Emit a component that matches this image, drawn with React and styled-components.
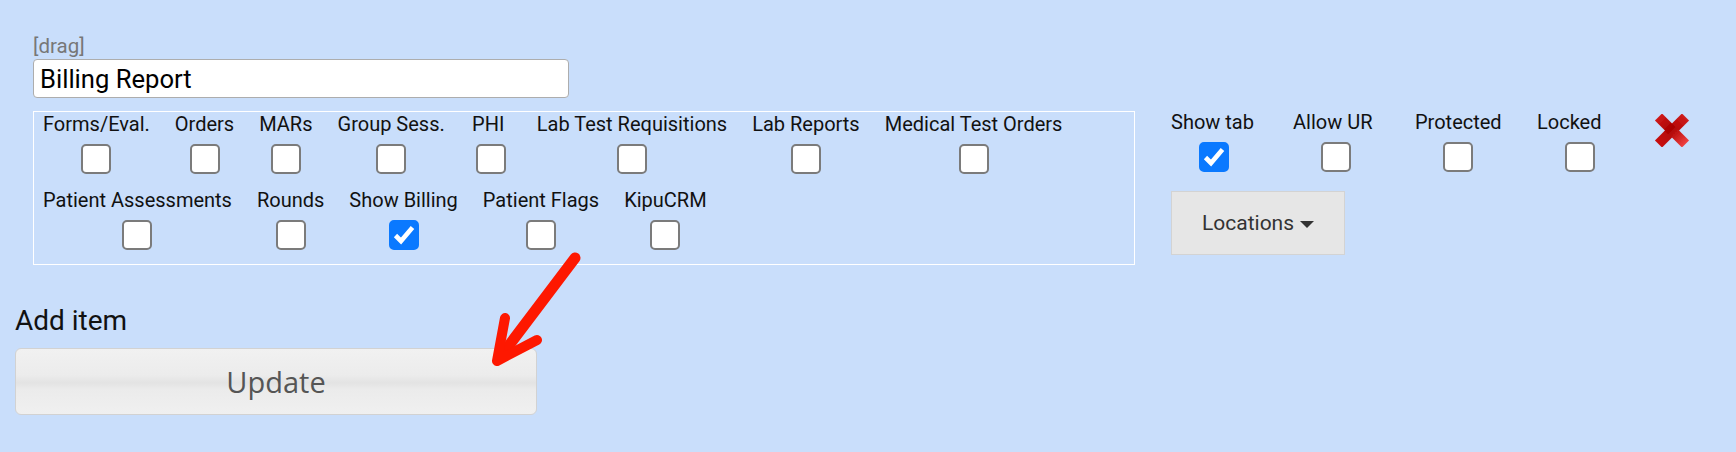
import React from "react";
import styled, { createGlobalStyle } from "styled-components";

const GlobalStyle = createGlobalStyle`
  html, body {
    margin: 0;
    padding: 0;
    background: #c9defb;
  }
  body {
    font-family: Roboto, "Liberation Sans", Arial, sans-serif;
    color: #111;
  }
  * { box-sizing: border-box; }
`;

const Page = styled.div`
  position: relative;
  width: 1736px;
  height: 452px;
  padding: 36px 15px 0 15px;
  overflow: hidden;
`;

const TabItem = styled.div`
  padding-left: 18px;
`;

const DragHandle = styled.div`
  font-size: 20.5px;
  line-height: 20px;
  color: #777;
  cursor: move;
`;

const NameInput = styled.input`
  display: block;
  margin-top: 3px;
  width: 536px;
  height: 39px;
  padding: 0 6px;
  border: 1px solid #adadad;
  border-radius: 4px;
  background: #fff;
  font-family: Roboto, "Liberation Sans", Arial, sans-serif;
  font-size: 25.6px;
  color: #000;
  outline: none;
`;

const SettingsRow = styled.div`
  display: flex;
  align-items: flex-start;
  margin-top: 13px;
`;

const PermBox = styled.div`
  width: 1102px;
  height: 154px;
  border: 1px solid #fff;
  padding: 0 9px;
  display: flex;
  flex-wrap: wrap;
  align-content: flex-start;
  column-gap: 25px;
  row-gap: 14px;
`;

const Perm = styled.label`
  min-width: 42px;
  display: flex;
  flex-direction: column;
  align-items: center;
`;

const PermLabel = styled.span`
  font-size: 20px;
  line-height: 24px;
  white-space: pre;
  color: #111;
`;

const Box = styled.span`
  display: flex;
  align-items: center;
  justify-content: center;
  width: 30px;
  height: 30px;
  margin-top: 8px;
  border-radius: 5px;
  border: 2px solid ${(p) => (p.$checked ? "#0a79ff" : "#7b7b7b")};
  background: ${(p) => (p.$checked ? "#0a79ff" : "#fff")};
`;

const TabOptions = styled.div`
  margin-left: 36px;
  margin-top: -1px;
`;

const OptionRow = styled.div`
  display: flex;
  align-items: flex-start;
`;

const OptionCol = styled.label`
  width: 86px;
  margin-right: 36px;
  display: flex;
  flex-direction: column;
  align-items: center;
`;

const OptionLabel = styled(PermLabel)`
  align-self: flex-start;
`;

const DeleteButton = styled.button`
  margin: 3px 0 0 -5px;
  padding: 0;
  border: 0;
  background: none;
  width: 36px;
  height: 35px;
  cursor: pointer;
`;

const LocationsButton = styled.button`
  display: flex;
  align-items: center;
  justify-content: center;
  gap: 6px;
  margin-top: 19px;
  width: 174px;
  height: 64px;
  border: 1px solid #d3d3d3;
  border-radius: 0;
  background: #e6e6e6;
  font-family: Roboto, "Liberation Sans", Arial, sans-serif;
  font-size: 21px;
  color: #333;
  cursor: pointer;
`;

const Caret = styled.span`
  width: 0;
  height: 0;
  margin-top: 2px;
  border-left: 7px solid transparent;
  border-right: 7px solid transparent;
  border-top: 7px solid #333;
`;

const AddItem = styled.div`
  margin-top: 39px;
  font-size: 28px;
  line-height: 33px;
  color: #111;
`;

const UpdateButton = styled.button`
  display: block;
  margin-top: 11px;
  width: 522px;
  height: 67px;
  border: 1px solid #d2d2d2;
  border-radius: 6px;
  background: linear-gradient(
    to bottom,
    #f1f1f1 0%,
    #ececec 40%,
    #e3e3e3 52%,
    #ebebeb 62%,
    #f0f0f0 100%
  );
  font-family: "Open Sans", "Noto Sans", sans-serif;
  font-size: 29px;
  color: #555;
  cursor: pointer;
`;

const Pointer = styled.svg`
  position: absolute;
  left: 0;
  top: 0;
  pointer-events: none;
`;

function CheckMark() {
  return (
    <svg width="26" height="26" viewBox="0 0 26 26">
      <path
        d="M4.5 13.5 L10 19 L21.5 5.5"
        fill="none"
        stroke="#fff"
        strokeWidth="4.6"
        strokeLinejoin="miter"
      />
    </svg>
  );
}

function Checkbox({ checked }) {
  return (
    <Box role="checkbox" aria-checked={checked} $checked={checked}>
      {checked && <CheckMark />}
    </Box>
  );
}

/* Glossy red cross used for removing a tab */
function DeleteIcon() {
  return (
    <svg width="36" height="35" viewBox="0 0 36 35">
      <defs>
        <linearGradient id="xArmA" x1="0" y1="0" x2="1" y2="1">
          <stop offset="0" stopColor="#d01a1a" />
          <stop offset="0.45" stopColor="#a80000" />
          <stop offset="1" stopColor="#f04040" />
        </linearGradient>
        <linearGradient id="xArmB" x1="1" y1="0" x2="0" y2="1">
          <stop offset="0" stopColor="#cf1c1c" />
          <stop offset="0.5" stopColor="#b00303" />
          <stop offset="1" stopColor="#c81010" />
        </linearGradient>
        <filter id="xSoft" x="-10%" y="-10%" width="120%" height="120%">
          <feGaussianBlur stdDeviation="0.55" />
        </filter>
      </defs>
      <g filter="url(#xSoft)" strokeWidth="10" strokeLinecap="butt">
        <line x1="31.5" y1="4" x2="4.5" y2="31" stroke="url(#xArmB)" />
        <line x1="4.5" y1="4" x2="31.5" y2="31" stroke="url(#xArmA)" />
      </g>
    </svg>
  );
}

const permissions = [
  { label: "Forms/Eval." },
  { label: "Orders" },
  { label: "MARs" },
  { label: "Group Sess." },
  { label: "PHI\u00a0" },
  { label: "Lab Test Requisitions" },
  { label: "Lab Reports" },
  { label: "Medical Test Orders" },
  { label: "Patient Assessments" },
  { label: "Rounds" },
  { label: "Show Billing", checked: true },
  { label: "Patient Flags" },
  { label: "KipuCRM" },
];

const tabOptions = [
  { label: "Show tab", checked: true },
  { label: "Allow UR" },
  { label: "Protected" },
  { label: "Locked" },
];

export default function App() {
  return (
    <>
      <GlobalStyle />
      <Page>
        <TabItem>
          <DragHandle>[drag]</DragHandle>
          <NameInput defaultValue="Billing Report" />
          <SettingsRow>
            <PermBox>
              {permissions.map((p) => (
                <Perm key={p.label}>
                  <PermLabel>{p.label}</PermLabel>
                  <Checkbox checked={!!p.checked} />
                </Perm>
              ))}
            </PermBox>
            <TabOptions>
              <OptionRow>
                {tabOptions.map((o) => (
                  <OptionCol key={o.label}>
                    <OptionLabel>{o.label}</OptionLabel>
                    <Checkbox checked={!!o.checked} />
                  </OptionCol>
                ))}
                <DeleteButton aria-label="Delete tab">
                  <DeleteIcon />
                </DeleteButton>
              </OptionRow>
              <LocationsButton>
                Locations <Caret />
              </LocationsButton>
            </TabOptions>
          </SettingsRow>
        </TabItem>
        <AddItem>Add item</AddItem>
        <UpdateButton>Update</UpdateButton>
        <Pointer width="1736" height="452" viewBox="0 0 1736 452">
          <g fill="none" stroke="#fe1800" strokeLinecap="round" strokeLinejoin="round">
            <path d="M575 258 L501 356" strokeWidth="11" />
            <path d="M505 318 L497 361 L537 340" strokeWidth="10" />
          </g>
        </Pointer>
      </Page>
    </>
  );
}
